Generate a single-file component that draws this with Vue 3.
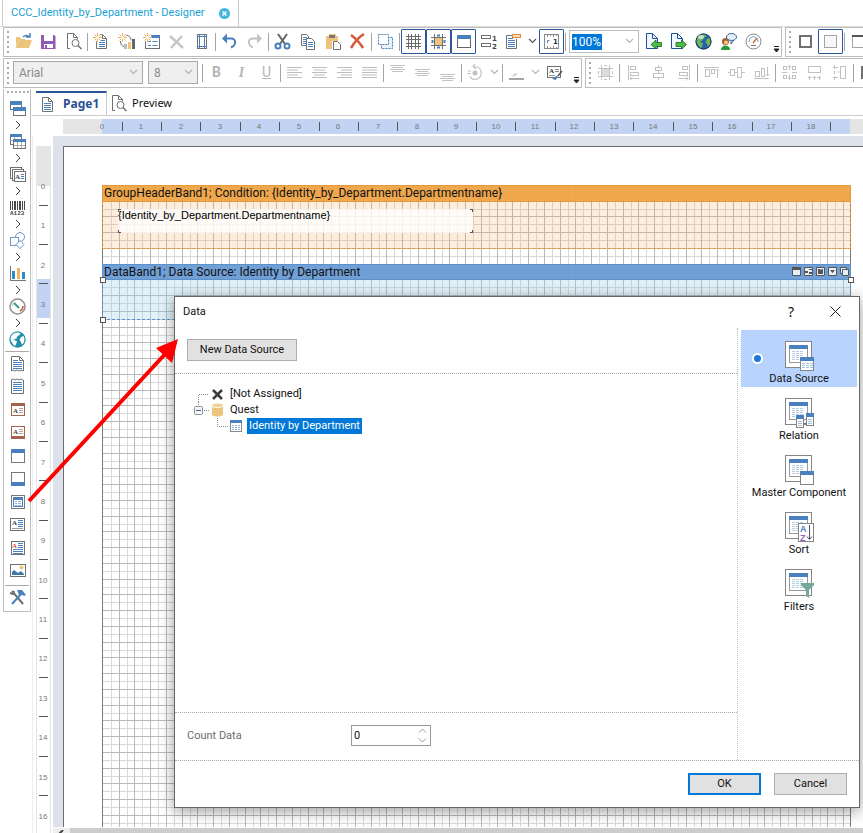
<!-- src/App.vue -->
<script setup>
import { ref } from 'vue'

const GRAY = '#707070'
const BLUE = '#4a80bb'
const SAND = '#ecc47c'
const DIM = '#c2c2c2'
const RUST = '#a2634f'

// small helpers for the 17x17 icon set
const box = (x, y, w, h, fill) => `<rect x="${x}" y="${y}" width="${w}" height="${h}" fill="${fill}"/>`
const line = (d, color = GRAY, width = 1) => `<path d="${d}" fill="none" stroke="${color}" stroke-width="${width}"/>`
const shape = (d, color) => `<path d="${d}" fill="${color}"/>`
const frame = (x, y, w, h, color = GRAY, fill = 'none') =>
  `<rect x="${x + 0.5}" y="${y + 0.5}" width="${w - 1}" height="${h - 1}" fill="${fill}" stroke="${color}"/>`
const star = '<circle cx="4.500" cy="4.500" r="4" fill="#fff"/>' + line('M4.500 0v9M0 4.500h9M1.500 1.500l6 6M7.500 1.500l-6 6', '#e9b35c') + '<circle cx="4.500" cy="4.500" r="1.500" fill="#fff"/>'
const sheet = line('M3.500 1.500h6l4 4v10h-10zM9.500 1.500v4h4')
const textRows = (x, y, w, n, color = BLUE) => Array.from({ length: n }, (_, i) => box(x, y + i * 2, w, 1, color)).join('')
const alignRows = (rows) => rows.map(([x, w], i) => box(x, 3 + i * 2.5, w, 1, '#bdbdbd')).join('')
const letterA = (x, y, color) => `<text x="${x}" y="${y}" font-family="Liberation Serif" font-weight="bold" font-size="7" fill="${color}">A</text>`
const globe = (sea, land) =>
  `<circle cx="8.500" cy="8.500" r="8" fill="${sea}"/>` +
  shape('M5 1.500c3-1 5-.5 6.500.5l-1 2-2 1-1 2.500-3 1 3.500 2-1 3-1.500 2-2-3-2.500-4c0-3 1.500-5.500 4-7zM12 6l3-1 1 3-1 4-2 2-1-3-1.500-2z', land)

const icons = {
  open: shape('M1 14l3-7h13l-3 8H1z', SAND) + shape('M1 13V4h4l1 2h4v1H4z', SAND) + line('M8 4c2-2 4-2 6-.5M15 0v4h-4', BLUE, 1.5),
  save: shape('M1 2h13l1.500 1v13H1z', '#8f5bb5') + box(4, 2, 9, 6, '#fff') + box(4, 11, 9, 4, '#fff') + box(5, 12, 2, 3, '#8f5bb5'),
  preview: line('M5 15.500H2.500V.5h6l4 4v2M8.500.5v4h4') + '<circle cx="10.500" cy="10" r="3.500" fill="#fff" stroke="#707070"/>' + line('M13 12.500l3.500 3.500', GRAY, 1.5),
  newPage: sheet + textRows(6, 7, 6, 4) + star,
  newChart: line('M6 2.500c4-1 7 1 7 5M2.500 8c0 3 1 5 4 6') + box(6, 11, 3, 5, '#bdbdbd') + box(10, 9, 3, 7, SAND) + box(14, 6, 3, 10, '#666') + star,
  newForm: frame(2, 2, 15, 14) + box(2, 2, 15, 3, BLUE) + line('M5 8.500h3M9.500 8.500h5M5 12.500h3M9.500 12.500h5', BLUE) + star,
  crossDim: line('M2 3l13 12M14 3L3 15', '#c6c6c6', 2.5),
  pageSetup: frame(4, 1, 10, 15) + line('M6.500 1v15M11.500 1v15M4 3.500h10M4 13.500h10', BLUE),
  undo: line('M4 5.500h6c6 0 5 7 0 9', BLUE, 2) + shape('M1 5.500l5-5v10z', BLUE),
  redo: line('M13 5.500H7c-6 0-5 7 0 9', DIM, 2) + shape('M16 5.500l-5-5v10z', DIM),
  cut: line('M4 1l7 10M13 1L6 11', '#666', 2) + `<g fill="none" stroke="${BLUE}" stroke-width="2"><circle cx="4" cy="13" r="2.500"/><circle cx="13" cy="13" r="2.500"/></g>`,
  copy: line('M2.500 1.500h5l2 2v9h-7z') + textRows(4, 4, 4, 4) + '<path d="M7.500 5.500h5l3 3v8h-8z" fill="#fff" stroke="#707070"/>' + textRows(9, 9, 5, 3),
  paste: shape('M2 3h3V1h7v2h2v5H8v8H2z', SAND) + box(5, 2, 6, 3, '#777') + '<path d="M9.500 8.500h4l3 3v5h-7z" fill="#fff" stroke="#707070"/>',
  remove: line('M2 2c4 3 9 8 12 13M15 1C10 4 5 10 2 15', '#d65a3c', 2.5),
  select: `<rect x="4.500" y="4.500" width="11" height="11" fill="#e9f1fa" stroke="${BLUE}" stroke-dasharray="2 1"/><rect x="1.500" y="1.500" width="10" height="10" fill="#fff" stroke="${BLUE}" stroke-dasharray="2 1"/>`,
  grid: line('M3.500 1v15M6.500 1v15M10.500 1v15M13.500 1v15M1 3.500h15M1 6.500h15M1 10.500h15M1 13.500h15', '#6a6a6a', 1),
  snap: box(5, 5, 7, 7, SAND) + line('M4.500 1v15M12.500 1v15M1 4.500h15M1 12.500h15') + line('M7 2.500h3M7 14.500h3M2.500 7v3M14.500 7v3', BLUE, 2),
  window: frame(2, 2, 14, 13, '#666', '#fff') + box(2, 2, 14, 4, BLUE),
  order: frame(1, 2, 10, 4) + frame(1, 10, 10, 4) + '<text x="12" y="8" font-family="DejaVu Sans" font-weight="bold" font-size="7" fill="#444">1</text><text x="12" y="16" font-family="DejaVu Sans" font-weight="bold" font-size="7" fill="#444">2</text>',
  template: line('M8 2.500H1.500v13h10V6') + textRows(3, 5, 5, 1) + textRows(3, 7, 7, 4) + frame(7, 1, 9, 4, '#e08a45', '#f8d9b8'),
  down: line('M5 6l3.500 3.500L12 6', '#555', 1.2),
  downDim: line('M5 6l3.500 3.500L12 6', '#b5b5b5', 1.2),
  ruler: frame(1, 1, 15, 15, '#888', '#fff') + line('M4.500 2v2M7.500 2v1M10.500 2v2M13.500 2v1M4.500 13v2M7.500 14v1M10.500 13v2M13.500 14v1', '#888') + '<text x="10" y="11" font-family="DejaVu Sans" font-weight="bold" font-size="7" fill="#333">1</text>' + line('M4.500 10V7.500h2', BLUE),
  pageIn: '<path d="M1.500.5h6l5 5v10h-11z" fill="#f2f8ff" stroke="#1c4fa0"/>' + line('M7.500.5v5h5', '#1c4fa0') + '<path d="M6 11.500l5-4.500v2.500h5.500v4H11V16z" fill="#4dbb45" stroke="#14641b" stroke-width=".8"/>',
  pageOut: '<path d="M1.500.5h6l5 5v10h-11z" fill="#f2f8ff" stroke="#1c4fa0"/>' + line('M7.500.5v5h5', '#1c4fa0') + '<path d="M16.500 11.500L11.500 7v2.500H6v4h5.500V16z" fill="#4dbb45" stroke="#14641b" stroke-width=".8"/>',
  globe: globe('#2a63a8', '#6cb75a') + '<circle cx="8.500" cy="8.500" r="7.500" fill="none" stroke="#21395c"/>' + '<ellipse cx="6" cy="4" rx="3" ry="2" fill="#fff" opacity=".6"/>',
  user: '<circle cx="5.500" cy="8.500" r="3.500" fill="#a65d1c"/><circle cx="6" cy="9.500" r="2" fill="#f4c796"/>' + shape('M1 17c0-6 9-6 9 0z', '#239a36') + '<ellipse cx="11.500" cy="4" rx="5" ry="3.500" fill="#e5effa" stroke="#3a5f93"/>' + line('M11 8v3l3-4', '#3a5f93'),
  gauge: '<circle cx="8.500" cy="8.500" r="7.500" fill="#fff" stroke="#858585"/>' + line('M4 9c0-7 9-7 9 0', '#5aaecb') + line('M8 10l4-5', '#d86840', 1.5) + line('M6 12.500h5', '#777'),
  square: '<rect x="3" y="3" width="11" height="11" fill="none" stroke="#707070" stroke-width="2"/>',
  squareLight: '<rect x="2.500" y="2.500" width="12" height="12" fill="#f7f7f7" stroke="#a5a5a5"/>',
  squareTop: frame(2, 2, 15, 13, '#a5a5a5') + box(2, 2, 15, 2, '#555'),
  left: alignRows([[1, 15], [1, 11], [1, 15], [1, 11], [1, 15]]),
  center: alignRows([[1, 15], [3, 11], [1, 15], [3, 11], [1, 15]]),
  right: alignRows([[1, 15], [5, 11], [1, 15], [5, 11], [1, 15]]),
  justify: alignRows([[1, 15], [1, 15], [1, 15], [1, 15], [1, 15]]),
  top: box(1, 1, 15, 1, DIM) + box(3, 3, 11, 1, DIM) + box(1, 5, 15, 1, DIM) + box(3, 7, 11, 1, DIM),
  middle: box(1, 5, 15, 1, DIM) + box(3, 7, 11, 1, DIM) + box(1, 9, 15, 1, DIM) + box(3, 11, 11, 1, DIM),
  bottom: box(1, 10, 15, 1, DIM) + box(3, 12, 11, 1, DIM) + box(1, 14, 15, 1, DIM) + box(3, 16, 11, 1, DIM),
  rotate: line('M7 2.500c10 0 9 13 1 13-2 0-4-1-5-3M8 0L6 2.500 9 5M1 7h3M0 9.500h4', '#c2c2c2', 1.2) + '<circle cx="8" cy="9" r="2.500" fill="#c2c2c2"/>',
  pen: shape('M15 3L8 11l-4 2 2-3 4-1z', '#c2c2c2') + box(1, 14, 15, 2, '#a5a5a5'),
  painter: frame(1, 2, 14, 12) + letterA(3, 9, '#333') + textRows(9, 5, 4, 2, '#888') + textRows(3, 11, 6, 1, '#9a9a9a') + line('M16 7l-4 5', '#555', 1.5) + shape('M12 11l-2 5-4-1z', BLUE),
  toGrid: box(5, 5, 7, 7, '#dcdcdc') + line('M4.500 1v15M12.500 1v15M1 4.500h15M1 12.500h15', DIM) + line('M7 1.500h3M7 15.500h3M1.500 7v3M15.500 7v3', DIM),
  alLeft: line('M3.500 1v15', DIM) + frame(5, 2, 6, 4, DIM) + frame(5, 8, 9, 4, DIM) + line('M14 14.500H5l2-2m-2 2l2 2', DIM),
  alCenter: line('M8.500 1v2M8.500 7v2M8.500 13v3', DIM) + frame(5, 3, 7, 4, DIM) + frame(3, 9, 11, 5, DIM),
  alRight: line('M14.500 1v15', DIM) + frame(7, 2, 6, 4, DIM) + frame(4, 8, 9, 4, DIM) + line('M3 14.500h10l-2-2m2 2l-2 2', DIM),
  alTop: line('M1 3.500h15', DIM) + frame(2, 5, 5, 8, DIM) + frame(8, 5, 4, 5, DIM) + line('M14.500 14V5l-2 2m2-2l2 2', DIM),
  alMiddle: line('M0 8.500h2M6 8.500h3M14 8.500h3', DIM) + frame(2, 5, 5, 7, DIM) + frame(9, 3, 5, 11, DIM),
  alBottom: line('M1 14.500h15', DIM) + frame(2, 7, 5, 6, DIM) + frame(8, 4, 4, 9, DIM) + line('M14.500 3v9l-2-2m2 2l2-2', DIM),
  sameSize: [[2, 2], [11, 2], [2, 11], [11, 11]].map(([x, y]) => frame(x, y, 4, 4, DIM)).join('') + line('M8.500 1v5M8.500 11v5M1 8.500h5M11 8.500h5M6.500 3h4M6.500 14h4', DIM),
  sameWidth: frame(2, 2, 13, 7, DIM) + line('M2 13.500h4M7 13.500h3M11 13.500h4M3.500 12v4M8.500 12v4M13.500 12v4', DIM),
  sameHeight: frame(9, 2, 6, 13, DIM) + line('M3.500 1v4M3.500 7v3M3.500 12v4M2 3.500h5M2 13.500h5M6.500 8h2', DIM),

  bands: frame(1, 1, 12, 9, GRAY, '#fff') + box(1, 1, 12, 4, BLUE) + frame(4, 7, 13, 9, GRAY, '#fff') + box(4, 7, 13, 4, BLUE),
  tables: frame(1, 1, 12, 11, GRAY, '#fff') + box(1, 1, 12, 3, BLUE) + line('M5.500 4v7M1 7.500h12', '#aaa') + frame(4, 6, 13, 10, GRAY, '#fff') + box(4, 6, 13, 3, BLUE) + line('M8.500 9v6M12.500 9v6M5 12.500h11', '#aaa'),
  texts: frame(1, 1, 12, 12, GRAY, '#fff') + frame(3, 3, 12, 12, GRAY, '#fff') + frame(5, 5, 12, 11, GRAY, '#fff') + letterA(6, 13, '#444') + textRows(12, 8, 3, 3),
  barcode: [[1, 1], [3, 1], [5, 2], [8, 1], [10, 2], [13, 1], [15, 1]].map(([x, w]) => box(x, 2, w, 9, '#4a4a4a')).join('') + '<text x="1" y="16" font-family="Liberation Mono" font-weight="bold" font-size="6" fill="#444">A123</text>',
  shapes: '<circle cx="11" cy="5" r="4.500" fill="#fff" stroke="#6b98c8"/><rect x="1.500" y="5.500" width="8" height="8" fill="#fff" stroke="#6b98c8"/><path d="M11 8.500l4 4-4 4-4-4z" fill="#fff" stroke="#6b98c8"/>',
  chart: box(1, 1, 1, 15, '#777') + box(1, 15, 16, 1, '#777') + box(3, 6, 3, 8, '#2a8aca') + box(8, 3, 3, 11, '#eeb55e') + box(13, 7, 3, 7, '#2a8aca'),
  dial: '<circle cx="8.500" cy="8.500" r="7.500" fill="#fff" stroke="#909090" stroke-width="1.500"/>' + line('M5 5l5 5', '#3a9a84', 2) + line('M14 8c0 3-1 4-3 5', '#d4583a', 1.5) + line('M3.500 8c0-2 1-3 2-4', '#aaa'),
  map: globe('#218fa8', '#fff') + '<circle cx="8.500" cy="8.500" r="7.500" fill="none" stroke="#218fa8"/>',
  reportTitle: line('M2.500 16V1.500h8l4 4V16M10.500 1.500v4h4') + line('M2 16l2-1 2 1 2-1 2 1 2-1 2 1') + textRows(4, 5, 5, 1) + textRows(4, 7, 9, 4),
  reportSummary: line('M2.500 2v13.500h12V2') + line('M2 2l2-1 2 1 2-1 2 1 2-1 2 1') + textRows(4, 4, 9, 5),
  pageHeader: frame(2, 2, 14, 13, RUST) + box(2, 2, 14, 3, RUST) + letterA(4, 12, '#444') + textRows(10, 7, 4, 3, '#c79d90'),
  pageFooter: frame(2, 2, 14, 13, RUST) + box(2, 12, 14, 3, RUST) + letterA(4, 10, '#444') + textRows(10, 5, 4, 3, '#c79d90'),
  header: frame(2, 2, 14, 14, '#777') + box(2, 2, 14, 4, BLUE),
  footer: frame(2, 2, 14, 14, '#777') + box(2, 12, 14, 4, BLUE),
  dataBand: frame(2, 2, 14, 14, '#777') + frame(4, 4, 10, 10, BLUE) + box(4, 4, 10, 3, BLUE) + textRows(6, 8, 2, 3, '#8fb3d9') + textRows(9, 8, 3, 3, '#8fb3d9'),
  text: frame(1, 2, 15, 13) + letterA(3, 9, '#444') + textRows(9, 4, 5, 4) + textRows(3, 12, 11, 1, '#999'),
  richText: frame(2, 2, 14, 14) + letterA(3, 9, '#d84a35') + textRows(9, 4, 5, 3) + textRows(4, 10, 10, 3),
  image: frame(1, 2, 16, 13) + shape('M3 13v-3l2-2 4 3 3-2 3 3v1z', '#3d78a8') + '<circle cx="12.500" cy="5.500" r="2" fill="#ecc47c"/>',
  tools: line('M3 2l11 13', GRAY, 2) + line('M13 4L3 15', BLUE, 2) + shape('M8 1h5l4 5-2 1-3-2-2 1z', BLUE) + line('M1 4l3 1 1-3', GRAY, 2),
}

const mainTools = [
  'open', 'save', 'preview', '|', 'newPage', 'newChart', 'newForm', 'crossDim', 'pageSetup', '|', 'undo', 'redo', '|',
  'cut', 'copy', 'paste', 'remove', '|', 'select', '|', 'grid', 'snap', 'window', 'order', 'template', 'down', 'ruler', '|',
]
const activeTools = ['grid', 'snap', 'window', 'ruler', 'squareLight']
const viewTools = ['pageIn', 'pageOut', 'globe', 'user', 'gauge']
const borderTools = ['square', 'squareLight', '|', 'squareTop']
const textTools = [
  'left', 'center', 'right', 'justify', '|', 'top', 'middle', 'bottom', '|', 'rotate', 'downDim', '|', 'pen', 'downDim', 'painter',
]
const layoutTools = [
  'toGrid', '|', 'alLeft', 'alCenter', 'alRight', '|', 'alTop', 'alMiddle', 'alBottom', '|', 'sameSize', 'sameWidth', 'sameHeight', '|', 'square',
]
const groups = ['bands', 'tables', 'texts', 'barcode', 'shapes', 'chart', 'dial', 'map']
const components = ['reportTitle', 'reportSummary', 'pageHeader', 'pageFooter', 'header', 'footer', 'dataBand', 'text', 'richText', 'image']

// one centimetre on the rulers, the grid has five steps in it
const CM = 39.37
const at = (n) => Math.round(n * CM)
const gridLines = (count) => Array.from({ length: count }, (_, i) => i + 1).map((i) => ({ pos: Math.round((i * CM) / 5) + 0.5, bold: i % 2 === 0 }))
const columns = gridLines(240)
const rows = gridLines(160)

const form = frame(0, 0, 27, 27, '#858585', '#fff') + frame(4, 4, 19, 18, '#999') + box(4, 4, 19, 4, BLUE) +
  [7, 11, 15].map((x) => textRows(x, 10, 3, 5, '#b4cde6')).join('')
const smallForm = (x, y, w, h) => frame(x, y, w, h, '#858585', '#fff') + box(x, y, w, 4, BLUE)
const panes = [
  { name: 'Data Source', icon: form + smallForm(15, 16, 14, 14) + [17, 21, 25].map((x) => textRows(x, 22, 3, 3, '#9fc0df')).join('') },
  { name: 'Relation', icon: form + smallForm(11, 17, 8, 13) + smallForm(21, 15, 8, 13) + textRows(13, 23, 4, 3, '#9fc0df') + textRows(23, 21, 4, 3, '#9fc0df') + line('M19 25.500h2') },
  { name: 'Master Component', icon: form + smallForm(15, 16, 14, 14) },
  { name: 'Sort', icon: form + frame(13, 11, 16, 19, '#858585', '#fff') + '<text x="15" y="20" font-family="Liberation Sans" font-weight="bold" font-size="9" fill="#4a80bb">A</text><text x="15" y="29" font-family="Liberation Sans" font-weight="bold" font-size="9" fill="#9564b8">Z</text>' + line('M24.500 13v14M22 24.500l2.500 3 2.500-3', '#555') },
  { name: 'Filters', icon: form + shape('M16 14h13v2l-5 5v8l-3-2v-6l-5-5z', '#75a898') },
]

const activePane = ref('Data Source')
const countData = ref(0)
const zoom = ref('100%')
</script>

<template>
  <div class="designer">
    <nav class="tabs">
      <div class="tab">
        <a href="#">CCC_Identity_by_Department - Designer</a>
        <button class="tab-close" aria-label="Close tab">
          <svg width="11" height="11" viewBox="0 0 11 11"><circle cx="5.500" cy="5.500" r="5.500" fill="#43b5dc" /><path d="M3.500 3.500l4 4M7.500 3.500l-4 4" stroke="#fff" stroke-width="1.500" /></svg>
        </button>
      </div>
    </nav>

    <div class="toolbar-row">
      <div class="toolbar main-bar">
        <template v-for="(tool, i) in mainTools" :key="i">
          <span v-if="tool === '|'" class="sep"></span>
          <button v-else class="tool" :class="{ active: activeTools.includes(tool), narrow: tool === 'down' }" :aria-label="tool">
            <svg width="17" height="17" viewBox="0 0 17 17" v-html="icons[tool]"></svg>
          </button>
        </template>
        <div class="combo zoom-combo">
          <input v-model="zoom" type="text" aria-label="Zoom" />
          <svg class="combo-arrow" width="17" height="17" viewBox="0 0 17 17" v-html="icons.downDim"></svg>
        </div>
        <button v-for="tool in viewTools" :key="tool" class="tool" :aria-label="tool">
          <svg width="17" height="17" viewBox="0 0 17 17" v-html="icons[tool]"></svg>
        </button>
        <button class="overflow" aria-label="More"><svg width="7" height="8" viewBox="0 0 7 8"><path d="M1 .5h5M1 3h5L3.500 6z" stroke="#222" fill="#222" /></svg></button>
      </div>
      <div class="toolbar side-bar">
        <template v-for="(tool, i) in borderTools" :key="i">
          <span v-if="tool === '|'" class="sep"></span>
          <button v-else class="tool" :class="{ active: activeTools.includes(tool) }" :aria-label="tool">
            <svg width="17" height="17" viewBox="0 0 17 17" v-html="icons[tool]"></svg>
          </button>
        </template>
      </div>
    </div>

    <div class="toolbar-row">
      <div class="toolbar text-bar">
        <div class="combo font-combo">
          <select aria-label="Font" disabled><option>Arial</option></select>
          <svg class="combo-arrow" width="17" height="17" viewBox="0 0 17 17" v-html="icons.downDim"></svg>
        </div>
        <div class="combo size-combo">
          <select aria-label="Font size" disabled><option>8</option></select>
          <svg class="combo-arrow" width="17" height="17" viewBox="0 0 17 17" v-html="icons.downDim"></svg>
        </div>
        <span class="sep"></span>
        <button class="tool letter bold">B</button>
        <button class="tool letter italic">I</button>
        <button class="tool letter underline">U</button>
        <span class="sep"></span>
        <template v-for="(tool, i) in textTools" :key="i">
          <span v-if="tool === '|'" class="sep"></span>
          <button v-else class="tool" :class="{ narrow: tool === 'downDim' }" :aria-label="tool">
            <svg width="17" height="17" viewBox="0 0 17 17" v-html="icons[tool]"></svg>
          </button>
        </template>
        <button class="overflow" aria-label="More"><svg width="7" height="8" viewBox="0 0 7 8"><path d="M1 .5h5M1 3h5L3.500 6z" stroke="#222" fill="#222" /></svg></button>
      </div>
      <div class="toolbar side-bar">
        <template v-for="(tool, i) in layoutTools" :key="i">
          <span v-if="tool === '|'" class="sep"></span>
          <button v-else class="tool" :aria-label="tool">
            <svg width="17" height="17" viewBox="0 0 17 17" v-html="icons[tool]"></svg>
          </button>
        </template>
      </div>
    </div>

    <div class="workspace">
      <aside class="toolbox">
        <template v-for="name in groups" :key="name">
          <button class="box-tool" :aria-label="name">
            <svg width="17" height="17" viewBox="0 0 17 17" v-html="icons[name]"></svg>
          </button>
          <svg v-if="name !== 'map'" class="box-more" width="17" height="16" viewBox="0 0 17 16"><path d="M7 4l4 4-4 4" fill="none" stroke="#444" /></svg>
        </template>
        <span class="box-line"></span>
        <button v-for="name in components" :key="name" class="box-tool tall" :aria-label="name">
          <svg width="17" height="17" viewBox="0 0 17 17" v-html="icons[name]"></svg>
        </button>
        <span class="box-line"></span>
        <button class="box-tool tall" aria-label="tools">
          <svg width="17" height="17" viewBox="0 0 17 17" v-html="icons.tools"></svg>
        </button>
      </aside>

      <main class="editor">
        <div class="page-tabs">
          <button class="page-tab current">
            <svg width="17" height="17" viewBox="0 0 17 17" v-html="sheet + textRows(5, 7, 7, 4)"></svg>
            Page1
          </button>
          <button class="page-tab">
            <svg width="17" height="17" viewBox="0 0 17 17" v-html="icons.preview"></svg>
            Preview
          </button>
        </div>

        <div class="ruler-h">
          <svg width="100%" height="15">
            <g v-for="n in 19" :key="n">
              <text :x="at(n - 1) + 39" y="10" text-anchor="middle">{{ n - 1 }}</text>
              <rect :x="at(n - 0.5) + 39" y="3" width="1" height="9" fill="#555" />
            </g>
          </svg>
        </div>

        <div class="surface">
          <div class="ruler-v">
            <svg width="13" height="100%">
              <rect width="13" height="40" fill="#e5e5e5" />
              <rect y="133" width="13" height="39" fill="#c2d3f3" />
              <g v-for="n in 17" :key="n">
                <text x="6" :y="at(n - 1) + 43" text-anchor="middle">{{ n - 1 }}</text>
                <rect x="2" :y="at(n - 0.5) + 39" width="9" height="1" fill="#555" />
              </g>
            </svg>
          </div>

          <div class="canvas">
            <div class="page">
              <div class="page-area">
                <svg class="grid">
                  <g v-for="bold in [false, true]" :key="bold" :stroke="bold ? '#b9b9b9' : '#d9d9d9'">
                    <template v-for="(c, i) in columns" :key="i">
                      <path v-if="c.bold === bold" :d="`M${c.pos} 0V1300`" />
                    </template>
                    <template v-for="(r, i) in rows" :key="i">
                      <path v-if="r.bold === bold" :d="`M0 ${r.pos}H2000`" />
                    </template>
                  </g>
                </svg>
                <section class="band group-band">
                  <header>GroupHeaderBand1; Condition: {Identity_by_Department.Departmentname}</header>
                  <div class="band-body">
                    <div class="text-box">{Identity_by_Department.Departmentname}</div>
                  </div>
                </section>
                <section class="band data-band">
                  <header>
                    <span>DataBand1; Data Source: Identity by Department</span>
                    <svg width="57" height="10" viewBox="0 0 57 10">
                      <g fill="#e9eef4" stroke="#555">
                        <path d="M.5.5h8v8h-8zM12.500.5h8v8h-8zM24.500.5h8v8h-8zM36.500.5h8v8h-8z" />
                        <path d="M48.500.5h6v6h-6z" />
                        <path d="M50.500 2.500h6v6h-6z" />
                      </g>
                      <path d="M0 0h9v3H0zM13 4h3v2h-3zM17 2h3v1h-3zM17 5h3v2h-3zM26 2h2l1 1 1-1h1v5h-5zM38 3h5l-2.500 3z" fill="#555" />
                    </svg>
                  </header>
                  <div class="band-body"></div>
                  <i class="handle top-left"></i>
                  <i class="handle top-right"></i>
                  <i class="handle bottom-left"></i>
                </section>
              </div>
            </div>
            <div class="scrollbar">
              <button aria-label="Scroll left"><svg width="6" height="5" viewBox="0 0 6 5"><path d="M5 0L2 3l3 3" fill="none" stroke="#444" stroke-width="2" /></svg></button>
            </div>
          </div>
        </div>
      </main>
    </div>

    <div class="dialog" role="dialog" aria-label="Data">
      <header class="dialog-title">
        <span>Data</span>
        <button class="help" aria-label="Help">?</button>
        <button aria-label="Close"><svg width="11" height="11" viewBox="0 0 11 11"><path d="M.5.5l10 10M10.500.5l-10 10" stroke="#222" /></svg></button>
      </header>
      <div class="dialog-main">
        <div class="dialog-content">
          <div class="new-source"><button class="push">New Data Source</button></div>
          <div class="tree">
            <div class="node">
              <svg width="18" height="16" viewBox="0 0 18 16"><path d="M5.500 16V8.500H16" fill="none" stroke="#888" stroke-dasharray="1 1" /></svg>
              <svg width="14" height="16" viewBox="0 0 14 16"><path d="M2 4l9 9M11 4l-9 9" stroke="#3c3c3c" stroke-width="2.500" /></svg>
              <span>[Not Assigned]</span>
            </div>
            <div class="node">
              <svg width="18" height="16" viewBox="0 0 18 16"><path d="M5.500 0v4M11 8.500h5" stroke="#888" stroke-dasharray="1 1" /><rect x="1.500" y="4.500" width="8" height="8" rx="1" fill="#f6f6f6" stroke="#919191" /><path d="M3 8.500h5" stroke="#3a62a8" /></svg>
              <svg width="14" height="16" viewBox="0 0 14 16"><path d="M1 3h11v10c-3 2-8 2-11 0z" fill="#ecc47c" /><ellipse cx="6.500" cy="3.500" rx="5.500" ry="2" fill="#f0cf92" /><path d="M1 4c2 2 9 2 11 0" fill="none" stroke="#fff" /></svg>
              <span>Quest</span>
            </div>
            <div class="node child">
              <svg width="18" height="16" viewBox="0 0 18 16"><path d="M5.500 0v8.500H16" fill="none" stroke="#888" stroke-dasharray="1 1" /></svg>
              <svg width="14" height="16" viewBox="0 0 14 16"><rect x=".5" y="2.500" width="11" height="11" fill="#fff" stroke="#888" /><path d="M0 2h12v3H0z" fill="#4a80bb" /><path d="M2 7.500h8M2 9.500h8M2 11.500h8" stroke="#8fb3d9" stroke-dasharray="2 1" /></svg>
              <span class="picked">Identity by Department</span>
            </div>
          </div>
          <div class="count">
            <label for="count">Count Data</label>
            <div class="spinner">
              <input id="count" v-model="countData" type="text" />
              <svg width="9" height="15" viewBox="0 0 9 15"><path d="M1 4.500L4.500 1 8 4.500M1 10.500L4.500 14 8 10.500" fill="none" stroke="#999" /></svg>
            </div>
          </div>
        </div>
        <div class="panes">
          <button v-for="pane in panes" :key="pane.name" class="pane" :class="{ chosen: pane.name === activePane }" @click="activePane = pane.name">
            <svg width="29" height="30" viewBox="0 0 29 30" v-html="pane.icon"></svg>
            <span>{{ pane.name }}</span>
          </button>
        </div>
      </div>
      <footer class="dialog-actions">
        <button class="push primary">OK</button>
        <button class="push">Cancel</button>
      </footer>
    </div>

    <!-- Callout arrow -->
    <svg class="arrow" width="156" height="170" viewBox="0 0 156 170">
      <path d="M2 165L140 16" stroke="#f00" stroke-width="4" />
      <path d="M151 3l-22 9 16 15z" fill="#f00" />
    </svg>
  </div>
</template>

<style>
body {
  margin: 0;
  background: #fff;
}
</style>

<style scoped>
.designer {
  position: relative;
  display: flex;
  flex-direction: column;
  height: 100vh;
  overflow: hidden;
  background: #fff;
  color: #111;
  font: 11px/16px Roboto, sans-serif;
}

*,
*::before {
  box-sizing: border-box;
}

button {
  padding: 0;
  border: 0;
  background: none;
  color: inherit;
  font: inherit;
}

svg {
  display: block;
  flex: none;
}

/* Document tabs */
.tabs {
  display: flex;
  height: 27px;
  padding-left: 2px;
  border-bottom: 1px solid #ddd;
}

.tab {
  display: flex;
  align-items: center;
  gap: 14px;
  padding: 0 8px;
  border: solid #ccc;
  border-width: 0 1px;
}

.tab a {
  color: #1a9fd4;
  font-size: 11px;
  text-decoration: none;
}

/* Toolbars */
.toolbar-row {
  display: flex;
  gap: 3px;
  margin-bottom: 1px;
  padding-left: 3px;
}

.toolbar {
  display: flex;
  flex: none;
  height: 30px;
  padding: 1px 0 0 7px;
  border: 1px solid #bdbdbd;
  background: repeating-linear-gradient(#aaa 0 2px, transparent 2px 5px) 3px 3px / 2px 22px no-repeat;
}

.main-bar {
  width: 779px;
}

.text-bar {
  width: 579px;
}

.side-bar {
  flex: 1;
  overflow: hidden;
  border-right: 0;
}

.tool {
  display: flex;
  flex: none;
  align-items: center;
  justify-content: center;
  width: 25px;
  height: 25px;
}

.tool.narrow {
  width: 13px;
}

.tool.active {
  border: 1px solid #2b579a;
  border-radius: 1px;
}

.sep {
  flex: none;
  width: 1px;
  height: 18px;
  margin: 4px 1px 0;
  background: #a5a5a5;
}

.combo {
  display: flex;
  flex: none;
  align-items: center;
  height: 23px;
  margin: 1px 2px 0;
  border: 1px solid #bcbcbc;
  background: #fff;
}

.combo input,
.combo select {
  min-width: 0;
  border: 0;
  outline: 0;
  appearance: none;
  background: transparent;
  color: #8c8c8c;
  font: 12px/16px Roboto, sans-serif;
  opacity: 1;
}

.combo select {
  flex: 1;
  padding: 0 5px;
}

.zoom-combo {
  justify-content: space-between;
  width: 70px;
  padding-left: 2px;
}

.zoom-combo input {
  width: 30px;
  padding: 0;
  background: #0078d7;
  color: #fff;
}

.font-combo,
.size-combo {
  border-color: #a9a9a9;
  background: #efefef;
}

.font-combo {
  width: 130px;
}

.size-combo {
  width: 50px;
  margin: 1px 3px 0;
}

.letter {
  color: #b5b5b5;
  font: 14px/17px "Liberation Serif", serif;
}

.bold {
  font-family: Roboto, sans-serif;
  font-weight: bold;
}

.italic {
  font-style: italic;
  font-weight: bold;
}

.underline {
  font-family: Roboto, sans-serif;
  text-decoration: underline;
}

.overflow {
  width: 10px;
  padding: 14px 0 0 2px;
  margin-left: auto;
}

/* Component toolbox */
.workspace {
  display: flex;
  flex: 1;
  min-height: 0;
  padding-left: 3px;
}

.toolbox {
  display: flex;
  flex: none;
  flex-direction: column;
  align-items: center;
  align-self: flex-start;
  width: 28px;
  padding: 11px 0 2px;
  border: solid #bdbdbd;
  border-width: 0 1px 1px;
  background: repeating-linear-gradient(90deg, #aaa 0 2px, transparent 2px 4px) 3px 2px / 22px 2px no-repeat;
}

.box-tool {
  flex: none;
  height: 17px;
}

.box-tool.tall {
  height: 23px;
}

.box-line {
  width: 24px;
  height: 1px;
  margin: 3px 0 0;
  background: #aaa;
}

/* Editor */
.editor {
  display: flex;
  flex: 1;
  flex-direction: column;
  min-width: 0;
  margin-left: 1px;
  padding-top: 2px;
}

.page-tabs {
  display: flex;
  height: 25px;
  padding-left: 4px;
  border-bottom: 1px solid #ccc;
}

.page-tab {
  display: flex;
  align-items: center;
  gap: 5px;
  padding: 0 3px;
  font: 11px/16px "Noto Sans", sans-serif;
}

.page-tab.current {
  gap: 7px;
  width: 71px;
  padding: 0 3px;
  border-top: 2px solid #2b579a;
  border-right: 1px solid #ccc;
  color: #2b4f94;
  font-size: 12px;
  font-weight: bold;
}

.ruler-h {
  margin: 3px 0 2px 31px;
  background: linear-gradient(90deg, #e5e5e5 39px, #c2d3f3 39px calc(100% - 13px), #e5e5e5 0);
}

.ruler-h text,
.ruler-v text {
  fill: #777;
  font: 8px "Liberation Sans", sans-serif;
}

.surface {
  display: flex;
  flex: 1;
  min-height: 0;
  border-left: 1px solid #eee;
}

.ruler-v {
  flex: none;
  width: 15px;
  margin: 10px 2px 0 3px;
  border: solid #e5e5e5;
  border-width: 0 1px;
}

.canvas {
  display: flex;
  flex: 1;
  flex-direction: column;
  min-width: 0;
  background: #dde1ea;
}

.page {
  flex: 1;
  min-height: 0;
  margin: 10px 0 0 10px;
  padding: 38px 12px 0 38px;
  overflow: hidden;
  border: solid #6e6e6e;
  border-width: 1px 0 0 1px;
  background: #fff;
}

.page-area {
  position: relative;
  height: 100%;
  border: solid #7a7a7a;
  border-width: 0 1px;
}

.grid {
  position: absolute;
  inset: 0;
  width: 100%;
  height: 100%;
}

.band {
  position: relative;
  margin: 0 -1px 15px;
}

.band header {
  display: flex;
  align-items: center;
  justify-content: space-between;
  height: 17px;
  padding: 0 1px;
  border: 1px solid #e59a3a;
  background: rgba(239, 163, 68, 0.95);
  font: 12px/15px Roboto, sans-serif;
  white-space: nowrap;
}

.band-body {
  height: 47px;
  padding: 7px 15px;
  border: 1px dashed #e59a3a;
  border-top: 0;
  background: rgba(240, 165, 85, 0.2);
}

.data-band header {
  height: 16px;
  border-color: #5b90cb;
  background: rgba(104, 155, 211, 0.95);
}

.data-band .band-body {
  height: 40px;
  border-color: #5b90cb;
  background: rgba(160, 210, 235, 0.3);
}

.text-box {
  width: 355px;
  height: 24px;
  background:
    linear-gradient(#555, #555) 0 0 / 3px 1px,
    linear-gradient(#555, #555) 0 0 / 1px 3px,
    linear-gradient(#555, #555) 100% 0 / 3px 1px,
    linear-gradient(#555, #555) 100% 0 / 1px 3px,
    linear-gradient(#555, #555) 0 100% / 3px 1px,
    linear-gradient(#555, #555) 0 100% / 1px 3px,
    linear-gradient(#555, #555) 100% 100% / 3px 1px,
    linear-gradient(#555, #555) 100% 100% / 1px 3px,
    rgba(255, 255, 255, 0.8);
  background-repeat: no-repeat;
  color: #000;
  font: 11px/12px "Liberation Sans", sans-serif;
}

.handle {
  position: absolute;
  width: 6px;
  height: 6px;
  border: 1px solid #555;
  background: #fff;
}

.top-left {
  top: 13px;
  left: -2px;
}

.top-right {
  top: 13px;
  right: -3px;
}

.bottom-left {
  bottom: -3px;
  left: -2px;
}

.scrollbar {
  height: 6px;
  border-top: 1px solid #fff;
  background: #cdcdcd;
}

.scrollbar button {
  display: block;
  width: 17px;
  height: 5px;
  padding: 2px 0 0 5px;
  overflow: hidden;
  background: #eee;
}

/* Data dialog */
.dialog {
  position: absolute;
  top: 296px;
  right: 3px;
  left: 174px;
  display: flex;
  flex-direction: column;
  border: 1px solid #666;
  background: #fff;
  box-shadow: 0 3px 14px rgba(0, 0, 0, 0.4);
}

.dialog-title {
  display: flex;
  align-items: center;
  height: 31px;
  padding: 0 18px 2px 8px;
}

.dialog-title span {
  flex: 1;
}

.dialog-title .help {
  margin-right: 36px;
  font: 14px/16px "Noto Sans", sans-serif;
}

.dialog-main {
  display: flex;
  border-bottom: 1px dotted #aaa;
}

.dialog-content {
  display: flex;
  flex: 1;
  flex-direction: column;
  border-right: 1px dotted #bbb;
}

.new-source {
  padding: 11px 12px 12px;
  border-bottom: 1px dotted #aaa;
}

.push {
  display: block;
  min-width: 73px;
  height: 22px;
  padding: 0 11px;
  border: 1px solid #adadad;
  background: #e1e1e1;
}

.new-source .push {
  min-width: 110px;
}

.push.primary {
  border: 2px solid #0078d7;
}

.tree {
  min-height: 338px;
  padding: 12px 18px;
}

.node {
  display: flex;
  align-items: center;
  height: 16px;
}

.node.child {
  padding-left: 19px;
}

.node span {
  padding: 0 2px;
  margin-left: 3px;
}

.node .picked {
  background: #0078d7;
  color: #fff;
}

.count {
  display: flex;
  align-items: center;
  height: 48px;
  padding: 0 12px 2px;
  border-top: 1px dotted #aaa;
  color: #6d6d6d;
}

.count label {
  width: 164px;
}

.spinner {
  display: flex;
  align-items: center;
  justify-content: space-between;
  width: 80px;
  height: 21px;
  padding: 0 3px 0 2px;
  border: 1px solid #999;
}

.spinner input {
  width: 50px;
  padding: 0;
  border: 0;
  outline: 0;
  background: transparent;
  color: #111;
  font: inherit;
}

.panes {
  flex: none;
  width: 121px;
  padding: 2px 2px 0 3px;
}

.pane {
  position: relative;
  display: flex;
  flex-direction: column;
  align-items: center;
  width: 100%;
  height: 57px;
  padding-top: 11px;
}

.pane.chosen {
  background: #b8d3fd;
}

.pane.chosen::before {
  content: '';
  position: absolute;
  top: 23px;
  left: 11px;
  width: 11px;
  height: 11px;
  border: 2px solid #fff;
  border-radius: 50%;
  background: #1f78dc;
}

.dialog-actions {
  display: flex;
  justify-content: flex-end;
  gap: 13px;
  padding: 12px;
}

.arrow {
  position: absolute;
  top: 336px;
  left: 27px;
  pointer-events: none;
}
</style>
